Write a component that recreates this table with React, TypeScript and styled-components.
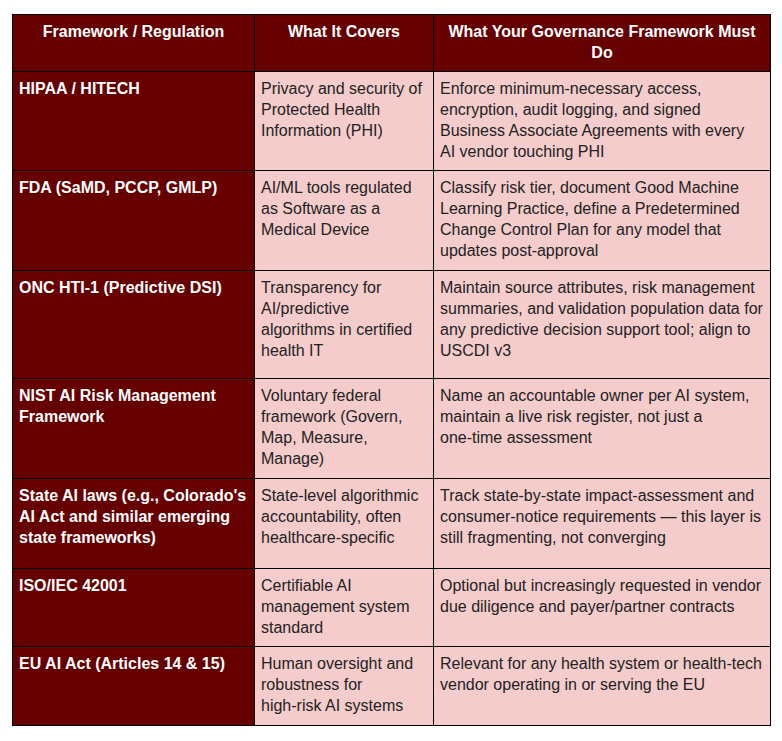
import type { ReactNode } from "react";
import styled, { createGlobalStyle } from "styled-components";

const GlobalStyle = createGlobalStyle`
  html, body {
    margin: 0;
    padding: 0;
    background: #ffffff;
  }
  body {
    font-family: "Liberation Sans", Arial, sans-serif;
  }
`;

const Page = styled.div`
  padding: 14px 12px;
`;

const Table = styled.div`
  display: grid;
  grid-template-columns: 241px 178px 336px;
  grid-template-rows: 56px 98px 99px 107px 99px 89px 77px 78px;
  gap: 1px;
  width: max-content;
  background: #000000;
  border: 1px solid #000000;
`;

const Cell = styled.div<{ $kind: "head" | "name" | "body" }>`
  padding: 6px 6px;
  font-size: 16px;
  line-height: 21px;
  background: ${(p) => (p.$kind === "body" ? "#f4cccc" : "#660000")};
  color: ${(p) => (p.$kind === "body" ? "#222222" : "#ffffff")};
  font-weight: ${(p) => (p.$kind === "body" ? 400 : 700)};
  text-align: ${(p) => (p.$kind === "head" ? "center" : "left")};
`;

const Keep = styled.span`
  white-space: nowrap;
`;

const headers = [
  "Framework / Regulation",
  "What It Covers",
  "What Your Governance Framework Must Do",
];

const rows: { name: string; covers: ReactNode; must: ReactNode }[] = [
  {
    name: "HIPAA / HITECH",
    covers: "Privacy and security of Protected Health Information (PHI)",
    must: (
      <>
        Enforce minimum-necessary access, encryption, audit logging, and signed
        Business Associate Agreements with every <Keep>AI vendor</Keep> touching PHI
      </>
    ),
  },
  {
    name: "FDA (SaMD, PCCP, GMLP)",
    covers: "AI/ML tools regulated as Software as a Medical Device",
    must: "Classify risk tier, document Good Machine Learning Practice, define a Predetermined Change Control Plan for any model that updates post-approval",
  },
  {
    name: "ONC HTI-1 (Predictive DSI)",
    covers: "Transparency for AI/predictive algorithms in certified health IT",
    must: "Maintain source attributes, risk management summaries, and validation population data for any predictive decision support tool; align to USCDI v3",
  },
  {
    name: "NIST AI Risk Management Framework",
    covers: "Voluntary federal framework (Govern, Map, Measure, Manage)",
    must: (
      <>
        Name an accountable owner per AI system, maintain a live risk register,
        not just a <Keep>one-time</Keep> assessment
      </>
    ),
  },
  {
    name: "State AI laws (e.g., Colorado's AI Act and similar emerging state frameworks)",
    covers: "State-level algorithmic accountability, often healthcare-specific",
    must: "Track state-by-state impact-assessment and consumer-notice requirements \u2014 this layer is still fragmenting, not converging",
  },
  {
    name: "ISO/IEC 42001",
    covers: "Certifiable AI management system standard",
    must: "Optional but increasingly requested in vendor due diligence and payer/partner contracts",
  },
  {
    name: "EU AI Act (Articles 14 & 15)",
    covers: (
      <>
        Human oversight and robustness for <Keep>high-risk</Keep> AI systems
      </>
    ),
    must: "Relevant for any health system or health-tech vendor operating in or serving the EU",
  },
];

function App() {
  return (
    <>
      <GlobalStyle />
      <Page>
        <Table>
          {headers.map((h) => (
            <Cell $kind="head" key={h}>
              {h}
            </Cell>
          ))}
          {rows.map((r) => [
            <Cell $kind="name" key={r.name + "-n"}>
              {r.name}
            </Cell>,
            <Cell $kind="body" key={r.name + "-c"}>
              {r.covers}
            </Cell>,
            <Cell $kind="body" key={r.name + "-m"}>
              {r.must}
            </Cell>,
          ])}
        </Table>
      </Page>
    </>
  );
}

export default App;
